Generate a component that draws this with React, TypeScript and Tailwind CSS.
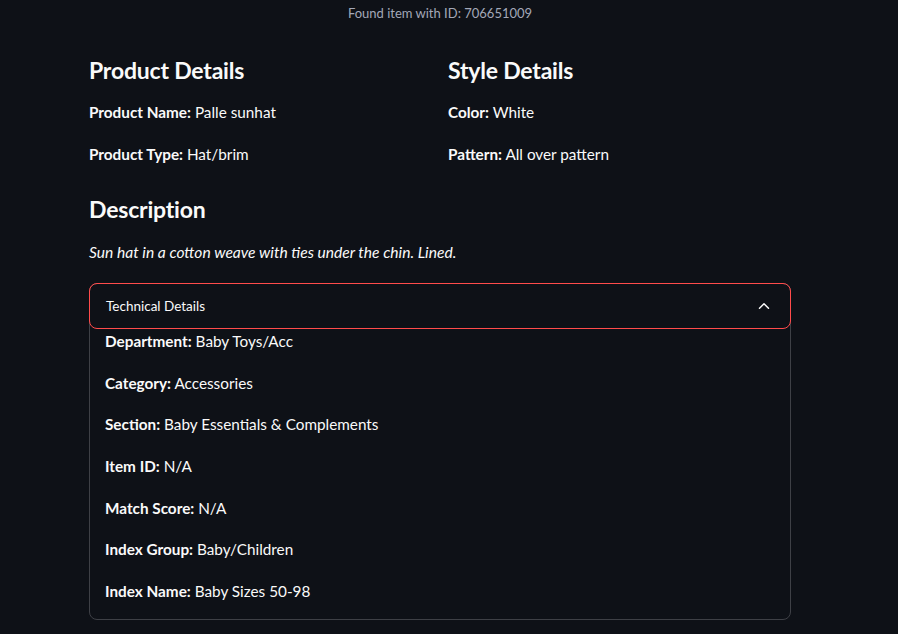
import { ChevronUp } from "lucide-react";

const productRows = [
  { label: "Product Name:", value: "Palle sunhat" },
  { label: "Product Type:", value: "Hat/brim" },
];

const styleRows = [
  { label: "Color:", value: "White" },
  { label: "Pattern:", value: "All over pattern" },
];

const techRows = [
  { label: "Department:", value: "Baby Toys/Acc" },
  { label: "Category:", value: "Accessories" },
  { label: "Section:", value: "Baby Essentials & Complements" },
  { label: "Item ID:", value: "N/A" },
  { label: "Match Score:", value: "N/A" },
  { label: "Index Group:", value: "Baby/Children" },
  { label: "Index Name:", value: "Baby Sizes 50-98" },
];

const Row = ({ label, value }: { label: string; value: string }) => (
  <p className="h-6 leading-6 text-[15.3px]">
    <span className="font-bold">{label}</span> {value}
  </p>
);

const DetailColumn = ({ title, rows }: { title: string; rows: { label: string; value: string }[] }) => (
  <div className="flex flex-col">
    <h3 className="h-10 leading-10 text-[23px] font-bold tracking-[-0.2px]">{title}</h3>
    <div className="mt-[10px] flex flex-col gap-[18px]">
      {rows.map((r) => (
        <Row key={r.label} {...r} />
      ))}
    </div>
  </div>
);

export default function App() {
  return (
    <div
      className="min-h-screen w-full bg-[#0e1117] text-[#fafafa]"
      style={{ fontFamily: "Lato, 'Noto Sans', sans-serif" }}
    >
      <div className="h-7 flex items-center justify-center pr-[18px] text-[13px] text-[#a3a8b8]">
        Found item with ID: 706651009
      </div>

      <div className="ml-[89px] w-[702px]">
        <div className="mt-[22px] grid grid-cols-2 gap-4">
          <DetailColumn title="Product Details" rows={productRows} />
          <DetailColumn title="Style Details" rows={styleRows} />
        </div>

        <h3 className="mt-[23px] h-10 leading-10 text-[23px] font-bold tracking-[-0.2px]">Description</h3>
        <p className="mt-[11px] h-6 leading-6 text-[15.6px] italic">
          Sun hat in a cotton weave with ties under the chin. Lined.
        </p>

        <div className="mt-[19px] rounded-lg border border-[#3e4046]">
          <div className="-mx-px -mt-px h-[46px] flex items-center justify-between rounded-lg border border-[#ff4b4b] pl-4 pr-[17px]">
            <span className="text-[13.5px]">Technical Details</span>
            <ChevronUp className="h-[18px] w-[18px] text-[#fafafa]" strokeWidth={2} />
          </div>
          <div className="flex flex-col gap-[17.7px] px-[15px] pb-4">
            {techRows.map((r) => (
              <Row key={r.label} {...r} />
            ))}
          </div>
        </div>
      </div>
    </div>
  );
}
